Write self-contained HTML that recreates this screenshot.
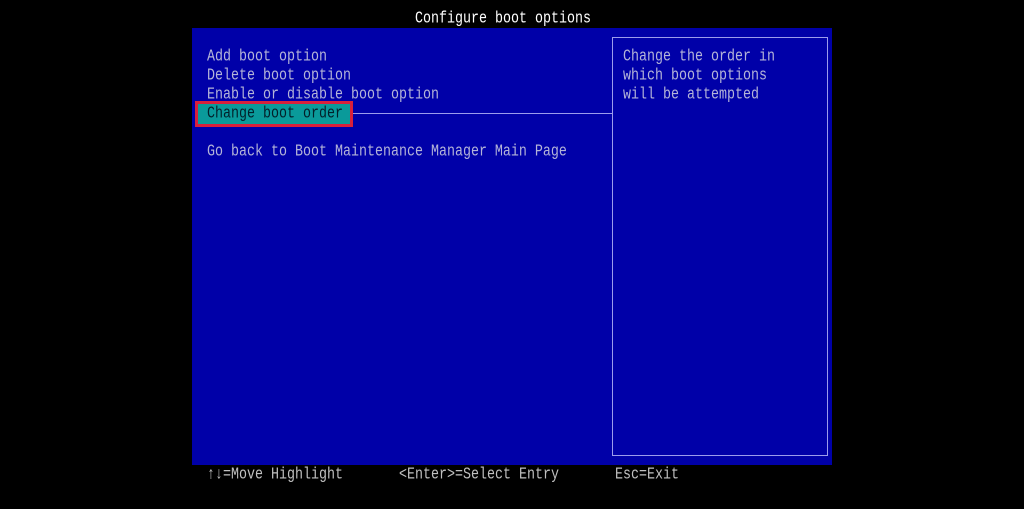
<html><head><style>
body{margin:0;width:1024px;height:509px;background:#000;position:relative;overflow:hidden;font-family:"Liberation Mono","DejaVu Sans Mono",monospace;font-size:13.33px}
.t{position:absolute;white-space:pre;line-height:19px;transform:scaleY(1.25);transform-origin:0 50%}
#panel{position:absolute;left:192px;top:28px;width:640px;height:437px;background:#0000a8}
.m{color:#b4b4d8}
</style></head><body>
<div class="t" style="left:415px;top:10px;color:#fff">Configure boot options</div>
<div id="panel"></div>
<div style="position:absolute;left:612px;top:37px;width:214px;height:417px;border:1px solid #9c9cec"></div>
<div style="position:absolute;left:352px;top:113px;width:260px;height:1px;background:#9c9cec"></div>
<div style="position:absolute;left:195px;top:101px;width:152px;height:20px;border:3px solid #d8203c;background:#0a9a9a"></div>
<div class="t m" style="left:207px;top:48px">Add boot option</div>
<div class="t m" style="left:207px;top:67px">Delete boot option</div>
<div class="t m" style="left:207px;top:86px">Enable or disable boot option</div>
<div class="t" style="left:207px;top:105px;color:#02202a">Change boot order</div>
<div class="t m" style="left:207px;top:143px">Go back to Boot Maintenance Manager Main Page</div>
<div class="t m" style="left:623px;top:48px">Change the order in</div>
<div class="t m" style="left:623px;top:67px">which boot options</div>
<div class="t m" style="left:623px;top:86px">will be attempted</div>
<div class="t" style="left:207px;top:466px;color:#c0c0c0">↑↓=Move Highlight</div>
<div class="t" style="left:399px;top:466px;color:#c0c0c0">&lt;Enter&gt;=Select Entry</div>
<div class="t" style="left:615px;top:466px;color:#c0c0c0">Esc=Exit</div>
</body></html>
